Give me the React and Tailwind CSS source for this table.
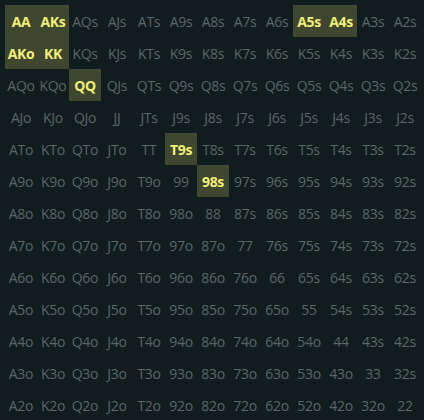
import React from 'react'

const ranks = ['A', 'K', 'Q', 'J', 'T', '9', '8', '7', '6', '5', '4', '3', '2']
const picked = ['AA', 'AKs', 'AKo', 'KK', 'QQ', 'A5s', 'A4s', 'T9s', '98s']

const handName = (r, c) => {
    if (r === c) return ranks[r] + ranks[c]
    if (c > r) return ranks[r] + ranks[c] + 's'
    return ranks[c] + ranks[r] + 'o'
}

const App = () => {
    return (
        <div className="w-[424px] h-[420px] bg-[#111c1f] p-[5px] overflow-hidden" style={{ fontFamily: '"Open Sans", "Noto Sans", sans-serif' }}>
            <div className="grid grid-cols-[repeat(13,32px)] grid-rows-[repeat(13,32px)]">
                {ranks.map((_, r) =>
                    ranks.map((_, c) => {
                        const name = handName(r, c)
                        const on = picked.includes(name)
                        return (
                            <div
                                key={name}
                                className={`flex items-center justify-center text-[14px] tracking-[-0.3px] whitespace-nowrap ${on ? 'bg-[#40472f] text-[#f2f07a] font-bold' : 'text-[#5c6767]'}`}
                            >
                                {name}
                            </div>
                        )
                    })
                )}
            </div>
        </div>
    )
}

export default App
